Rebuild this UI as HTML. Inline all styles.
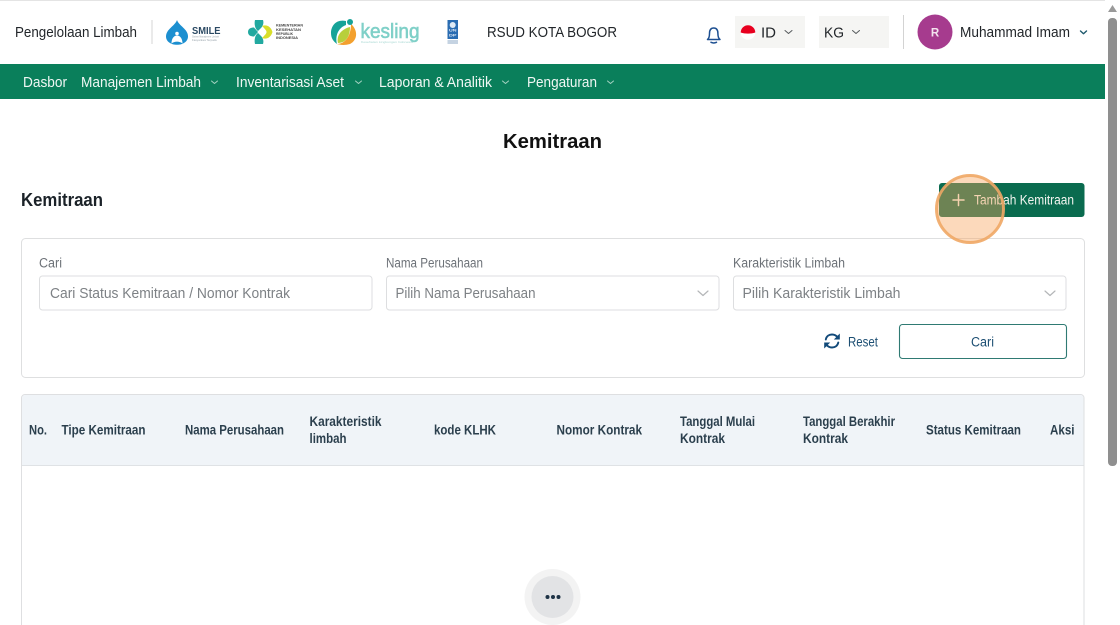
<!DOCTYPE html>
<html lang="id">
<head>
<meta charset="utf-8">
<title>Kemitraan</title>
<style>
html,body{margin:0;padding:0;background:#fff;width:1120px;height:625px;overflow:hidden}
svg{display:block}
text{font-family:"Liberation Sans",sans-serif;}
.n{font-size:15px;fill:#f0f7f4}
.d{font-size:15px;fill:#22262a}
.h{font-size:13.5px;font-weight:700;fill:#2b3f4d}
.l{font-size:13.5px;fill:#6d7278}
.p{font-size:15px;fill:#7d8185}
.c{fill:none;stroke-linecap:round;stroke-linejoin:round}
</style>
</head>
<body>
<svg width="1120" height="625" viewBox="0 0 1120 625" xmlns="http://www.w3.org/2000/svg">
<defs><filter id="b" x="-10%" y="-10%" width="120%" height="120%"><feGaussianBlur stdDeviation="0.35"/></filter></defs>
<rect width="1120" height="625" fill="#fff"/>
<!-- top bar -->
<rect x="0" y="0" width="1105" height="1" fill="#e4e4e4"/>
<text class="d" x="15" y="37" textLength="122" lengthAdjust="spacingAndGlyphs">Pengelolaan Limbah</text>
<rect x="151.500" y="20" width="1" height="24" fill="#d5d5d5"/>
<g filter="url(#b)">
  <!-- SMILE -->
  <path d="M177 20C175 26 166 29 166 36.500C166 41.500 171 44.800 177 44.800C183 44.800 188 41.500 188 36.500C188 29 179 26 177 20Z" fill="#1f8fd0"/>
  <path d="M171.500 43.500C171.500 38.500 174 35.500 177 35.500C180 35.500 182.500 38.500 182.500 43.500C179.500 41 174.500 41 171.500 43.500Z" fill="#fff"/>
  <circle cx="177" cy="33.500" r="1.800" fill="#fff"/>
  <text x="192" y="33.800" font-size="10.500" font-weight="700" fill="#2c4a63" textLength="28.500" lengthAdjust="spacingAndGlyphs">SMILE</text>
  <text x="192" y="37.500" font-size="2.800" fill="#9aa5ad" textLength="27" lengthAdjust="spacingAndGlyphs">Sistem Manajemen Limbah</text>
  <text x="192" y="41" font-size="2.800" fill="#9aa5ad" textLength="25" lengthAdjust="spacingAndGlyphs">Fasyankes Terpadu</text>
  <!-- Kemenkes -->
  <path d="M255 20L263 20C264 23 263 26 261 28L258 31C255 29 254 24 255 20Z" fill="#21a9a0"/>
  <path d="M255 44L263 44C264 41 263 38 261 36L258 33C255 35 254 40 255 44Z" fill="#21a9a0"/>
  <path d="M248 32C248 28.500 251 27.500 254 27.500L258 32L254 36.500C251 36.500 248 35.500 248 32Z" fill="#21a9a0"/>
  <path d="M262 26C267 24 271 27 272.500 32C271 37 267 40 262 38C265 35 266.500 33.500 266.500 32C266.500 30.500 265 29 262 26Z" fill="#d8de2c"/>
  <text x="276" y="26.500" font-size="3.400" font-weight="700" fill="#444" textLength="27" lengthAdjust="spacingAndGlyphs">KEMENTERIAN</text>
  <text x="276" y="30.800" font-size="3.400" font-weight="700" fill="#444" textLength="25" lengthAdjust="spacingAndGlyphs">KESEHATAN</text>
  <text x="276" y="35" font-size="3.400" font-weight="700" fill="#444" textLength="17" lengthAdjust="spacingAndGlyphs">REPUBLIK</text>
  <text x="276" y="39.200" font-size="3.400" font-weight="700" fill="#444" textLength="22" lengthAdjust="spacingAndGlyphs">INDONESIA</text>
  <!-- kesling -->
  <path d="M346 21C336 19 331 26 331 33C331 38 333 41 337 44C335 36 338 28 346 25Z" fill="#17a398"/>
  <path d="M351 24C358 30 358 40 350 44C345 45.500 340 45 337 44C345 44 351 36 351 24Z" fill="#f3a02e"/>
  <path d="M350 27C342 29 336 35 338 43C346 43 350 36 350 27Z" fill="#b8cf3a"/>
  <circle cx="350" cy="22" r="3" fill="#17a398"/>
  <text x="360.500" y="38" font-size="20.500" fill="#7fd0c8" stroke="#7fd0c8" stroke-width=".6" textLength="59" lengthAdjust="spacingAndGlyphs">kesling</text>
  <text x="361" y="43" font-size="2.800" fill="#a8d8d3" textLength="52" lengthAdjust="spacingAndGlyphs">Kesehatan Lingkungan Indonesia</text>
  <!-- UNDP -->
  <rect x="447.500" y="20" width="10.500" height="19" fill="#2b6cb2"/>
  <circle cx="452.700" cy="25" r="3" fill="#dfeaf5"/>
  <text x="449" y="31.500" font-size="3.500" font-weight="700" fill="#dfeaf5" textLength="7.500" lengthAdjust="spacingAndGlyphs">UN</text>
  <text x="449" y="36.500" font-size="3.500" font-weight="700" fill="#dfeaf5" textLength="7.500" lengthAdjust="spacingAndGlyphs">DP</text>
  <rect x="447.500" y="40" width="10.500" height="4" fill="#c5d3e2"/>
</g>
<text class="d" x="487" y="37" textLength="130" lengthAdjust="spacingAndGlyphs">RSUD KOTA BOGOR</text>

<!-- bell -->
<path class="c" stroke="#1d4f91" stroke-width="1.500" d="M707.500 39.500C709.500 38 709.500 35.500 709.500 33.500C709.500 30 711 28 713.700 28C716.400 28 717.900 30 717.900 33.500C717.900 35.500 717.900 38 720 39.500Z"/>
<path class="c" stroke="#1d4f91" stroke-width="1.500" d="M711 42.300C712.500 43 715 43 716.500 42.300"/>

<!-- ID -->
<rect x="735" y="16" width="70" height="32" fill="#f5f5f3"/>
<circle cx="748" cy="32.500" r="7.300" fill="#fff"/>
<path d="M740.700 32.500A7.300 7.300 0 0 1 755.300 32.500C751 34 745 34 740.700 32.500Z" fill="#e8001f"/>
<text class="d" x="761" y="37.500" textLength="15" lengthAdjust="spacingAndGlyphs">ID</text>
<path class="c" stroke="#55595c" stroke-width="1" d="M785 30.500L788.500 33.500L792 30.500"/>
<!-- KG -->
<rect x="819" y="16" width="70" height="32" fill="#f5f5f3"/>
<text class="d" x="824" y="37.500" textLength="20" lengthAdjust="spacingAndGlyphs">KG</text>
<path class="c" stroke="#55595c" stroke-width="1" d="M852.500 30.500L856 33.500L859.500 30.500"/>
<rect x="903" y="15" width="1" height="34" fill="#d3d3d3"/>
<!-- user -->
<circle cx="935" cy="32" r="17.500" fill="#a63b8e"/>
<text x="935" y="36.300" font-size="11.500" font-weight="700" fill="#f3e3ef" text-anchor="middle">R</text>
<text class="d" x="960" y="37" textLength="110" lengthAdjust="spacingAndGlyphs">Muhammad Imam</text>
<path class="c" stroke="#1f5a6e" stroke-width="1.400" d="M1080.500 31L1083.500 33.800L1086.500 31"/>

<!-- nav -->
<rect x="0" y="64" width="1105" height="35" fill="#0a7f5b"/>
<text class="n" x="23" y="87" textLength="44" lengthAdjust="spacingAndGlyphs">Dasbor</text>
<text class="n" x="81" y="87" textLength="120" lengthAdjust="spacingAndGlyphs">Manajemen Limbah</text>
<text class="n" x="236" y="87" textLength="108" lengthAdjust="spacingAndGlyphs">Inventarisasi Aset</text>
<text class="n" x="379" y="87" textLength="113" lengthAdjust="spacingAndGlyphs">Laporan &amp; Analitik</text>
<text class="n" x="527" y="87" textLength="70" lengthAdjust="spacingAndGlyphs">Pengaturan</text>
<g class="c" stroke="#a5d2c2" stroke-width="1">
  <path d="M211.500 81L214.500 83.500L217.500 81"/>
  <path d="M355.500 81L358.500 83.500L361.500 81"/>
  <path d="M502.500 81L505.500 83.500L508.500 81"/>
  <path d="M607.500 81L610.500 83.500L613.500 81"/>
</g>

<!-- headings -->
<text x="503" y="148" font-size="20.500" font-weight="700" fill="#111" textLength="99" lengthAdjust="spacingAndGlyphs">Kemitraan</text>
<text x="21" y="206" font-size="18.500" font-weight="700" fill="#1b2228" textLength="82" lengthAdjust="spacingAndGlyphs">Kemitraan</text>

<!-- add button -->
<rect x="939" y="183" width="145.500" height="34" rx="3" fill="#0a6b4f"/>
<path class="c" stroke="#f3f3ea" stroke-width="1.500" d="M958.500 194.500V205.500M953 200H964"/>
<text x="974" y="204.500" font-size="13.500" fill="#f2f5f0" textLength="100" lengthAdjust="spacingAndGlyphs">Tambah Kemitraan</text>

<!-- filter card -->
<rect x="21.500" y="238.500" width="1063" height="139" rx="4" fill="none" stroke="#dedfe0"/>
<text class="l" x="39" y="267.500" textLength="23" lengthAdjust="spacingAndGlyphs">Cari</text>
<text class="l" x="386" y="267.500" textLength="97" lengthAdjust="spacingAndGlyphs">Nama Perusahaan</text>
<text class="l" x="733" y="267.500" textLength="112" lengthAdjust="spacingAndGlyphs">Karakteristik Limbah</text>
<g fill="#fff" stroke="#dddee0">
  <rect x="39.500" y="276" width="332.500" height="34" rx="3"/>
  <rect x="386.500" y="276" width="332.500" height="34" rx="3"/>
  <rect x="733.500" y="276" width="332.500" height="34" rx="3"/>
</g>
<text class="p" x="50" y="298" textLength="240" lengthAdjust="spacingAndGlyphs">Cari Status Kemitraan / Nomor Kontrak</text>
<text class="p" x="395.500" y="298" textLength="140" lengthAdjust="spacingAndGlyphs">Pilih Nama Perusahaan</text>
<text class="p" x="742.500" y="298" textLength="158" lengthAdjust="spacingAndGlyphs">Pilih Karakteristik Limbah</text>
<g class="c" stroke="#b4b6b8" stroke-width="1.200">
  <path d="M698 291L703 295.500L708 291"/>
  <path d="M1045 291L1050 295.500L1055 291"/>
</g>
<!-- reset -->
<g class="c" stroke="#124a7a" stroke-width="1.900">
  <path d="M825.800 339.500C826.500 336 829.300 334.500 832 334.500C834.500 334.500 836.300 335.500 837.800 337.500"/>
  <path d="M838.300 342.500C837.500 346 834.700 347.500 832 347.500C829.500 347.500 827.700 346.500 826.200 344.500"/>
</g>
<path d="M839.800 333.500V339.500H833.800Z" fill="#124a7a"/>
<path d="M824.200 348.500V342.500H830.200Z" fill="#124a7a"/>
<text x="848" y="346.500" font-size="13.500" fill="#1d4f73" textLength="30" lengthAdjust="spacingAndGlyphs">Reset</text>
<rect x="899.500" y="324.500" width="167" height="34" rx="3" fill="#fff" stroke="#2f7a73" stroke-width="1.100"/>
<text x="971" y="346.500" font-size="13.500" fill="#1d4f73" textLength="23" lengthAdjust="spacingAndGlyphs">Cari</text>

<!-- table -->
<path d="M21.500 625V398A3.500 3.500 0 0 1 25 394.500H1080.500A3.500 3.500 0 0 1 1084 398V625" fill="#fff" stroke="#dedfe1"/>
<path d="M22 465V398A3 3 0 0 1 25 395H1080.500A3 3 0 0 1 1083.500 398V465Z" fill="#f0f4f8"/>
<rect x="22" y="465" width="1061.500" height="1" fill="#dfe2e5"/>
<text class="h" x="29" y="434.500" textLength="18" lengthAdjust="spacingAndGlyphs">No.</text>
<text class="h" x="61.500" y="434.500" textLength="84" lengthAdjust="spacingAndGlyphs">Tipe Kemitraan</text>
<text class="h" x="185" y="434.500" textLength="99" lengthAdjust="spacingAndGlyphs">Nama Perusahaan</text>
<text class="h" x="309.500" y="426" textLength="72" lengthAdjust="spacingAndGlyphs">Karakteristik</text>
<text class="h" x="309.500" y="443" textLength="37" lengthAdjust="spacingAndGlyphs">limbah</text>
<text class="h" x="434" y="434.500" textLength="62" lengthAdjust="spacingAndGlyphs">kode KLHK</text>
<text class="h" x="556.500" y="434.500" textLength="85.500" lengthAdjust="spacingAndGlyphs">Nomor Kontrak</text>
<text class="h" x="680" y="426" textLength="75" lengthAdjust="spacingAndGlyphs">Tanggal Mulai</text>
<text class="h" x="680" y="443" textLength="45" lengthAdjust="spacingAndGlyphs">Kontrak</text>
<text class="h" x="803" y="426" textLength="92" lengthAdjust="spacingAndGlyphs">Tanggal Berakhir</text>
<text class="h" x="803" y="443" textLength="45" lengthAdjust="spacingAndGlyphs">Kontrak</text>
<text class="h" x="926" y="434.500" textLength="95" lengthAdjust="spacingAndGlyphs">Status Kemitraan</text>
<text class="h" x="1050" y="434.500" textLength="24.500" lengthAdjust="spacingAndGlyphs">Aksi</text>

<!-- loader -->
<circle cx="552.500" cy="597" r="28" fill="#f3f3f3"/>
<circle cx="552.500" cy="597" r="21" fill="#e2e3e5"/>
<g fill="#1e3346">
  <circle cx="547.500" cy="597" r="2"/>
  <circle cx="553" cy="597" r="2"/>
  <circle cx="558.500" cy="597" r="2"/>
</g>

<!-- click highlight -->
<circle cx="970" cy="209" r="33.500" fill="#f9a45e" fill-opacity=".42" stroke="#efa765" stroke-opacity=".9" stroke-width="3"/>

<!-- scrollbar -->
<rect x="1105" y="0" width="15" height="625" fill="#fff"/>
<path d="M1112.500 5L1108 12H1117Z" fill="#9a9a9a"/>
<rect x="1108" y="18" width="9" height="448" rx="4" fill="#8f8f8f"/>
</svg>
</body>
</html>
